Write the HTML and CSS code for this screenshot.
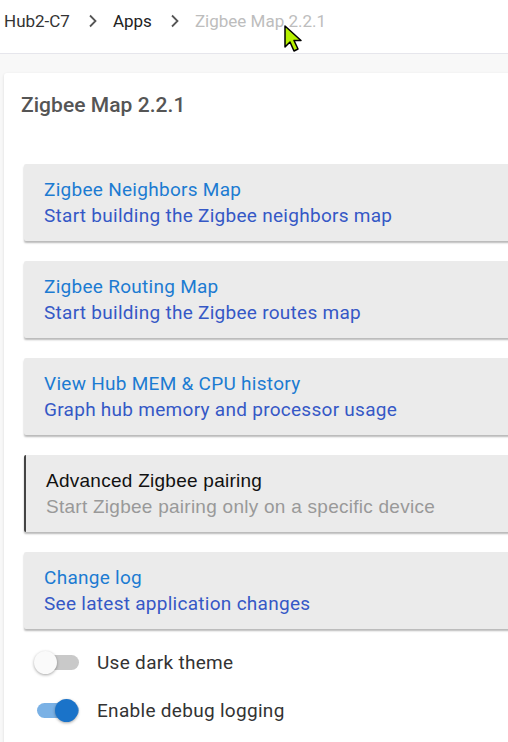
FILE: index.html
```html
<!DOCTYPE html>
<html>
<head>
<meta charset="utf-8">
<link rel="stylesheet" href="styles.css">
</head>
<body>
<header class="topbar">
  <nav class="crumbs">
    <span class="crumb c-hub">Hub2-C7</span>
    <svg class="chev" width="10" height="14" viewBox="0 0 10 14"><path d="M2 1.5 L7.5 7 L2 12.5" fill="none" stroke="#555" stroke-width="1.8"/></svg>
    <span class="crumb c-apps">Apps</span>
    <svg class="chev" width="10" height="14" viewBox="0 0 10 14"><path d="M2 1.5 L7.5 7 L2 12.5" fill="none" stroke="#555" stroke-width="1.8"/></svg>
    <span class="crumb c-cur">Zigbee Map 2.2.1</span>
  </nav>
  <svg class="cursor" width="22" height="30" viewBox="0 0 22 30"><path d="M1 1 L1 22 L6 17 L10 26 L14 24 L10 15.5 L17 15.5 Z" fill="#b5f000" stroke="#000" stroke-width="1.5" stroke-linejoin="round"/></svg>
</header>
<main class="page">
  <section class="card">
    <h1 class="title">Zigbee Map 2.2.1</h1>
    <div class="btns">
      <div class="btn">
        <div class="b1">Zigbee Neighbors Map</div>
        <div class="b2">Start building the Zigbee neighbors map</div>
      </div>
      <div class="btn">
        <div class="b1">Zigbee Routing Map</div>
        <div class="b2">Start building the Zigbee routes map</div>
      </div>
      <div class="btn">
        <div class="b1">View Hub MEM &amp; CPU history</div>
        <div class="b2">Graph hub memory and processor usage</div>
      </div>
      <div class="btn btn-adv">
        <div class="a1">Advanced Zigbee pairing</div>
        <div class="a2">Start Zigbee pairing only on a specific device</div>
      </div>
      <div class="btn">
        <div class="b1">Change log</div>
        <div class="b2">See latest application changes</div>
      </div>
    </div>
    <div class="toggles">
      <label class="tog">
        <span class="sw"><span class="track"></span><span class="knob"></span></span>
        <span class="tl">Use dark theme</span>
      </label>
      <label class="tog on">
        <span class="sw"><span class="track"></span><span class="knob"></span></span>
        <span class="tl">Enable debug logging</span>
      </label>
    </div>
  </section>
</main>
</body>
</html>
```

FILE: styles.css
```css
* { box-sizing: border-box; }
html, body { margin: 0; padding: 0; }
body {
  width: 508px;
  height: 742px;
  overflow: hidden;
  background: #f8f8f8;
  font-family: Roboto, "Noto Sans", sans-serif;
}
.topbar {
  position: relative;
  height: 54px;
  background: #fff;
  border-bottom: 1px solid #e6e6ec;
  display: flex;
  align-items: flex-start;
  padding: 10px 0 0 4px;
}
.crumbs {
  display: flex;
  align-items: center;
  font-size: 17px;
  line-height: 22px;
}
.crumb { white-space: nowrap; }
.c-hub { color: #333; }
.c-apps { color: #222; }
.c-cur { color: #bdbdbd; }
.chev { margin: 0 15px 0 18px; }
.cursor { position: absolute; left: 284px; top: 25px; }
.page {
  padding: 19px 0 0 4px;
}
.card {
  background: #fff;
  border-radius: 3px 0 0 0;
  box-shadow: 0 1px 3px rgba(0,0,0,0.12);
  width: 520px;
  padding: 18px 0 20px 17px;
  min-height: 700px;
}
.title {
  margin: 0;
  font-size: 21px;
  font-weight: 500;
  color: #555;
  line-height: 28px;
  letter-spacing: 0.05px;
}
.btns {
  margin-top: 45px;
  padding-left: 3px;
  display: flex;
  flex-direction: column;
  gap: 20px;
}
.btn {
  background: #ebebeb;
  height: 77px;
  padding: 13px 0 0 20px;
  border-radius: 2px 0 0 2px;
  box-shadow: 0 2px 2px rgba(0,0,0,0.28);
  font-size: 19px;
  letter-spacing: 0.28px;
  line-height: 26px;
  white-space: nowrap;
}
.b1 { color: #1c7bd2; }
.b2 { color: #3558c6; }
.btn-adv {
  border-left: 2px solid #444;
  font-family: "Liberation Sans", Arial, sans-serif;
  padding-left: 20px;
  letter-spacing: 0.26px;
}
.a1 { color: #111; }
.a2 { color: #999; }
.toggles {
  margin-top: 20px;
  padding-left: 13px;
  display: flex;
  flex-direction: column;
  gap: 22px;
}
.tog {
  display: flex;
  align-items: center;
  height: 26px;
}
.sw {
  position: relative;
  width: 46px;
  height: 24px;
  display: inline-block;
}
.track {
  position: absolute;
  left: 3px; top: 5px;
  width: 42px; height: 15px;
  border-radius: 8px;
  background: #c9c9c9;
}
.knob {
  position: absolute;
  left: 0; top: 1px;
  width: 23px; height: 23px;
  border-radius: 50%;
  background: #fafafa;
  box-shadow: 0 1px 3px rgba(0,0,0,0.35);
}
.tog.on .track { background: #7ab1e5; }
.tog.on .knob { left: 21px; background: #1a73c9; }
.tl {
  margin-left: 17px;
  font-size: 19px;
  letter-spacing: 0.3px;
  color: #333;
}
```
